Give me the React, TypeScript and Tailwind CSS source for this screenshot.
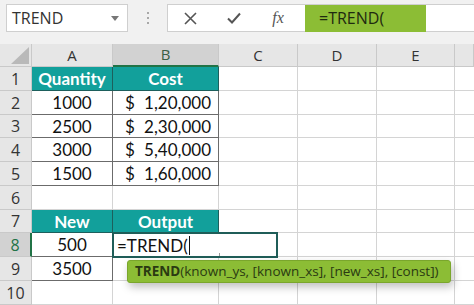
const ROWS = [24, 24, 23, 24, 24, 24, 23, 24, 24, 24];

const font = "font-['Lato','Noto_Sans',sans-serif]";

type Cell = { text?: string; kind?: "head" | "num" | "money"; money?: string };

const data: Record<number, [Cell, Cell]> = {
  1: [{ text: "Quantity", kind: "head" }, { text: "Cost", kind: "head" }],
  2: [{ text: "1000", kind: "num" }, { money: "1,20,000", kind: "money" }],
  3: [{ text: "2500", kind: "num" }, { money: "2,30,000", kind: "money" }],
  4: [{ text: "3000", kind: "num" }, { money: "5,40,000", kind: "money" }],
  5: [{ text: "1500", kind: "num" }, { money: "1,60,000", kind: "money" }],
  7: [{ text: "New", kind: "head" }, { text: "Output", kind: "head" }],
  8: [{ text: "500", kind: "num" }, {}],
  9: [{ text: "3500", kind: "num" }, {}],
};

function DataCell({ cell }: { cell?: Cell }) {
  if (!cell || !cell.kind) {
    return <div className="border-r border-b border-[#d4d4d4]" />;
  }
  if (cell.kind === "head") {
    return (
      <div className="flex items-center justify-center bg-[#12a09b] border-r border-b border-[#1d5f5c] text-white font-bold text-[17px] leading-none">
        {cell.text}
      </div>
    );
  }
  if (cell.kind === "money") {
    return (
      <div className="flex items-center justify-between pl-[12px] pr-[7px] border-r border-b border-[#6b6b6b] text-[#111] text-[17px] leading-none">
        <span>$</span>
        <span>{cell.money}</span>
      </div>
    );
  }
  return (
    <div className="flex items-center justify-center border-r border-b border-[#6b6b6b] text-[#111] text-[17px] leading-none">
      {cell.text}
    </div>
  );
}

export default function App() {
  return (
    <div className={`relative w-[474px] h-[305px] overflow-hidden bg-white ${font}`}>
      {/* Formula bar */}
      <div className="h-[44px] bg-[#f1f1f1] flex items-start pt-[4px] pl-[6px] gap-0">
        <div className="w-[122px] h-[28px] bg-white border border-[#cfcfcf] flex items-center justify-between pl-[5px] pr-[8px]">
          <span className="text-[16px] text-[#333] font-['Open_Sans',sans-serif]">TREND</span>
          <svg width="8" height="5" viewBox="0 0 8 5">
            <path d="M0 0 L8 0 L4 5 Z" fill="#777" />
          </svg>
        </div>
        <div className="w-[39px] h-[28px] flex flex-col items-center justify-center gap-[3px]">
          <span className="w-[2px] h-[2px] bg-[#a8a8a8]" />
          <span className="w-[2px] h-[2px] bg-[#a8a8a8]" />
          <span className="w-[2px] h-[2px] bg-[#a8a8a8]" />
        </div>
        <div className="flex-1 h-[28px] bg-white border border-r-0 border-[#cfcfcf] flex items-center">
          <div className="w-[44px] flex justify-center">
            <svg width="13" height="13" viewBox="0 0 13 13">
              <path d="M1 1 L12 12 M12 1 L1 12" stroke="#555" strokeWidth="1.6" />
            </svg>
          </div>
          <div className="w-[44px] flex justify-center">
            <svg width="14" height="12" viewBox="0 0 14 12">
              <path d="M1 6.5 L5 10.5 L13 1.5" stroke="#555" strokeWidth="2" fill="none" />
            </svg>
          </div>
          <div className="w-[44px] flex justify-center">
            <span className="italic text-[16px] text-[#555] font-['Liberation_Serif',serif]">fx</span>
          </div>
          <div className="w-[121px] h-[27px] bg-[#8cbd35] ml-[5px] flex items-center pl-[14px] text-[16px] text-[#1f2a10] font-['Open_Sans',sans-serif]">
            =TREND(
          </div>
        </div>
      </div>

      {/* Sheet grid */}
      <div className="grid grid-cols-[32px_81px_106px_79px_79px_78px_1fr] grid-rows-[23px_24px_24px_23px_24px_24px_24px_23px_24px_24px_24px]">
        {/* Column headers */}
        <div className="bg-[#e6e6e6] border-r border-b border-[#c9c9c9] flex items-end justify-end pr-[2px] pb-[2px]">
          <svg width="18" height="17" viewBox="0 0 18 17">
            <path d="M18 0 L18 17 L0 17 Z" fill="#b9b9b9" />
          </svg>
        </div>
        <div className="bg-[#e6e6e6] border-r border-b border-[#c9c9c9] flex items-center justify-center text-[15px] leading-none text-[#333] font-['Open_Sans',sans-serif]">A</div>
        <div className="bg-[#d2d2d2] border-r border-[#c9c9c9] border-b-2 border-b-[#217346] flex items-center justify-center text-[15px] leading-none text-[#3b5f45] font-['Open_Sans',sans-serif]">B</div>
        {["C", "D", "E", ""].map((c, i) => (
          <div key={i} className="bg-[#e6e6e6] border-r border-b border-[#c9c9c9] flex items-center justify-center text-[15px] leading-none text-[#333] font-['Open_Sans',sans-serif]">
            {c}
          </div>
        ))}

        {ROWS.map((_, idx) => {
          const r = idx + 1;
          const row = data[r];
          const active = r === 8;
          return [
            <div
              key={`h${r}`}
              className={`flex items-center justify-center border-b border-[#c9c9c9] text-[16px] leading-none font-['Open_Sans',sans-serif] ${
                active ? "bg-[#d2d2d2] text-[#217346] border-r-2 border-r-[#217346]" : "bg-[#e6e6e6] text-[#333] border-r"
              }`}
            >
              {r}
            </div>,
            <DataCell key={`a${r}`} cell={row?.[0]} />,
            <DataCell key={`b${r}`} cell={row?.[1]} />,
            <div key={`c${r}`} className="border-r border-b border-[#d4d4d4]" />,
            <div key={`d${r}`} className="border-r border-b border-[#d4d4d4]" />,
            <div key={`e${r}`} className="border-r border-b border-[#d4d4d4]" />,
            <div key={`f${r}`} className="border-b border-[#d4d4d4]" />,
          ];
        })}
      </div>

      {/* In-cell editor on B8 */}
      <div className="absolute left-[112px] top-[232px] w-[166px] h-[26px] border-2 border-[#1f5d58] bg-white flex items-center pl-[3px] leading-none">
        <span className="text-[17px] text-[#111]">=TREND(</span>
        <span className="w-px h-[19px] bg-[#111] ml-[1px]" />
        <span className="absolute left-[105px] bottom-0 w-px h-[3px] bg-[#9a9a9a]" />
      </div>

      {/* Function tooltip */}
      <div className="absolute left-[127px] top-[260px] w-[324px] h-[23px] rounded-[3px] bg-[#8cbd35] border border-[#7aa62c] shadow-[2px_4px_8px_rgba(0,0,0,0.25)] flex items-center pl-[7px] whitespace-nowrap text-[13.5px] leading-none text-[#2a3a12] font-['Open_Sans',sans-serif]">
        <span className="font-bold">TREND</span>
        <span>(known_ys, [known_xs], [new_xs], [const])</span>
      </div>
    </div>
  );
}
